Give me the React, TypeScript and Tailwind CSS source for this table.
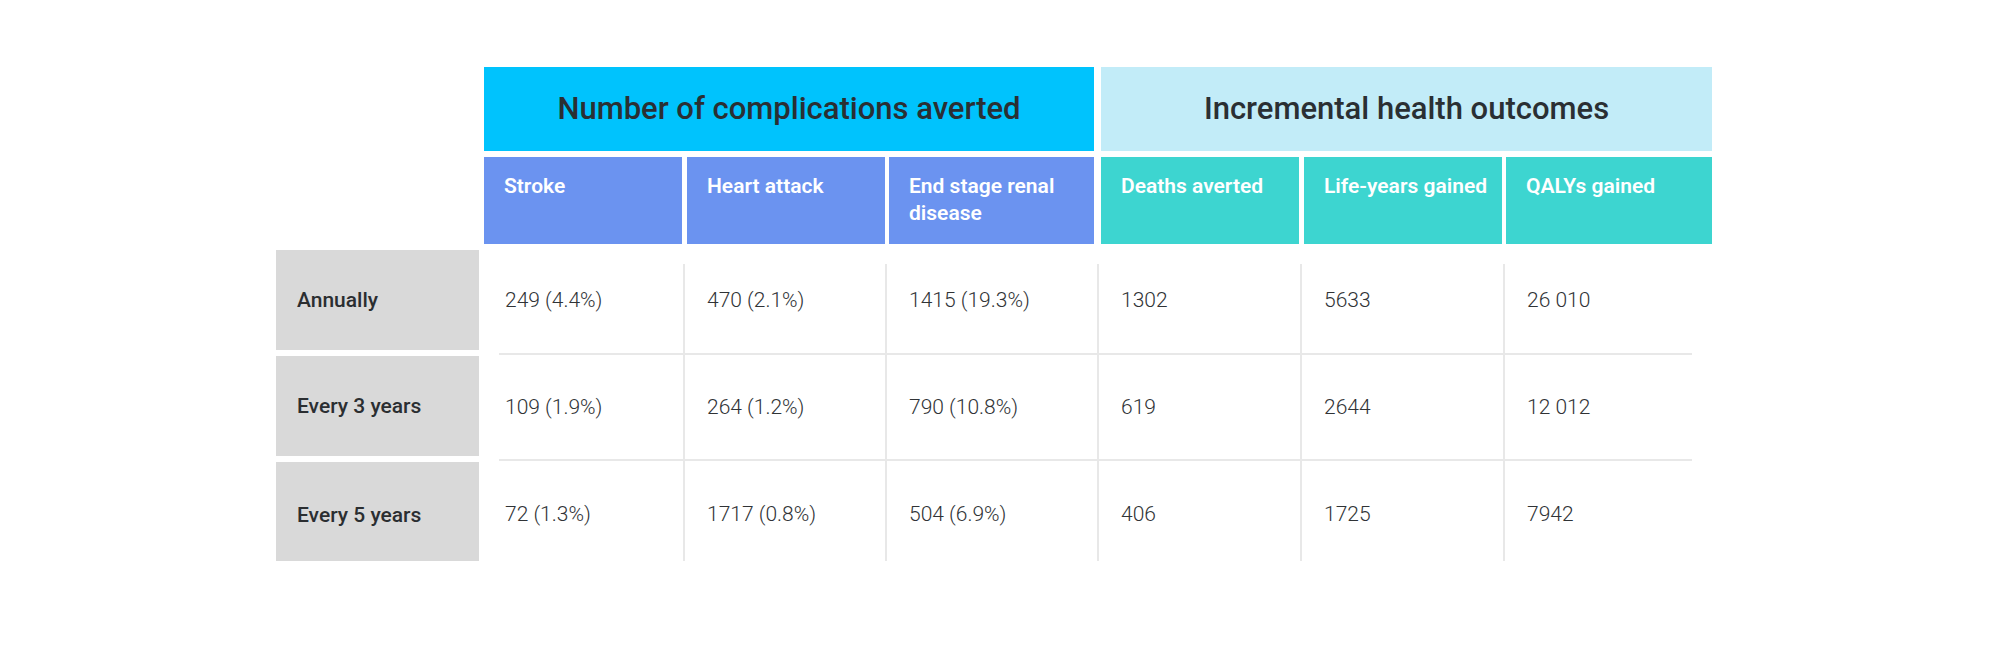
import React from "react";

const font = { fontFamily: "Roboto, 'Liberation Sans', Arial, sans-serif" };

type Row = { label: string; values: string[] };

const rows: Row[] = [
  { label: "Annually", values: ["249 (4.4%)", "470 (2.1%)", "1415 (19.3%)", "1302", "5633", "26 010"] },
  { label: "Every 3 years", values: ["109 (1.9%)", "264 (1.2%)", "790 (10.8%)", "619", "2644", "12 012"] },
  { label: "Every 5 years", values: ["72 (1.3%)", "1717 (0.8%)", "504 (6.9%)", "406", "1725", "7942"] },
];

function DataRow({ values, index }: { values: string[]; index: number }) {
  const first = index === 0;
  const txt = "flex items-center text-[21px] font-light text-[#303336] whitespace-nowrap";
  const inner = first ? "pb-[15px]" : index === 2 ? "pt-[8px]" : "pt-[1px]";
  return (
    <div
      className={
        first
          ? "flex h-[89px] mt-[14px]"
          : "flex ml-[15px] mr-[20px] border-t-2 border-[#e8e8e8] " + (index === 2 ? "h-[102px]" : "h-[106px]")
      }
    >
      <div className={`${txt} ${inner} ${first ? "w-[199px] pl-[21px]" : "w-[184px] pl-[6px]"}`}>{values[0]}</div>
      <div className={`${txt} ${inner} w-[202px] pl-[22px] border-l-2 border-[#e8e8e8]`}>{values[1]}</div>
      <div className={`${txt} ${inner} w-[212px] pl-[22px] border-l-2 border-[#e8e8e8]`}>{values[2]}</div>
      <div className={`${txt} ${inner} w-[203px] pl-[22px] border-l-2 border-[#e8e8e8]`}>{values[3]}</div>
      <div className={`${txt} ${inner} w-[203px] pl-[22px] border-l-2 border-[#e8e8e8]`}>{values[4]}</div>
      <div className={`${txt} ${inner} ${first ? "w-[209px]" : "w-[189px]"} pl-[22px] border-l-2 border-[#e8e8e8]`}>
        {values[5]}
      </div>
    </div>
  );
}

export default function App() {
  const sub = "h-[87px] pl-[20px] pt-[16px] text-[21px] leading-[27px] font-semibold text-white";
  return (
    <div className="w-[2000px] h-[647px] bg-white pt-[67px] pl-[276px]" style={font}>
      {/* group headers */}
      <div className="flex">
        <div className="w-[208px]" />
        <div className="w-[610px] h-[84px] bg-[#00c3fd] flex items-center justify-center text-[31px] font-medium text-[#2a2f33]">
          Number of complications averted
        </div>
        <div className="w-[611px] h-[84px] ml-[7px] bg-[#c2ecf8] flex items-center justify-center text-[31px] font-medium text-[#2a2f33]">
          Incremental health outcomes
        </div>
      </div>

      {/* sub headers */}
      <div className="flex mt-[6px]">
        <div className="w-[208px]" />
        <div className={`${sub} w-[198px] bg-[#6b93f0]`}>Stroke</div>
        <div className={`${sub} w-[198px] ml-[5px] bg-[#6b93f0]`}>Heart attack</div>
        <div className={`${sub} w-[205px] ml-[4px] bg-[#6b93f0] pr-[16px]`}>End stage renal disease</div>
        <div className={`${sub} w-[198px] ml-[7px] bg-[#3dd5d0]`}>Deaths averted</div>
        <div className={`${sub} w-[198px] ml-[5px] bg-[#3dd5d0]`}>Life-years gained</div>
        <div className={`${sub} w-[206px] ml-[4px] bg-[#3dd5d0]`}>QALYs gained</div>
      </div>

      {/* body */}
      <div className="flex mt-[6px]">
        <div className="flex flex-col gap-[6px] w-[203px]">
          {rows.map((r, i) => (
            <div
              key={r.label}
              className={`${i === 2 ? "h-[99px] pt-[8px]" : i === 0 ? "h-[100px] pt-[2px]" : "h-[100px] pt-[1px]"} bg-[#d9d9d9] flex items-center pl-[21px] text-[21px] font-medium text-[#2b2e31]`}
            >
              {r.label}
            </div>
          ))}
        </div>
        <div className="ml-[5px] flex flex-col w-[1228px]">
          {rows.map((r, i) => (
            <DataRow key={r.label} values={r.values} index={i} />
          ))}
        </div>
      </div>
    </div>
  );
}
